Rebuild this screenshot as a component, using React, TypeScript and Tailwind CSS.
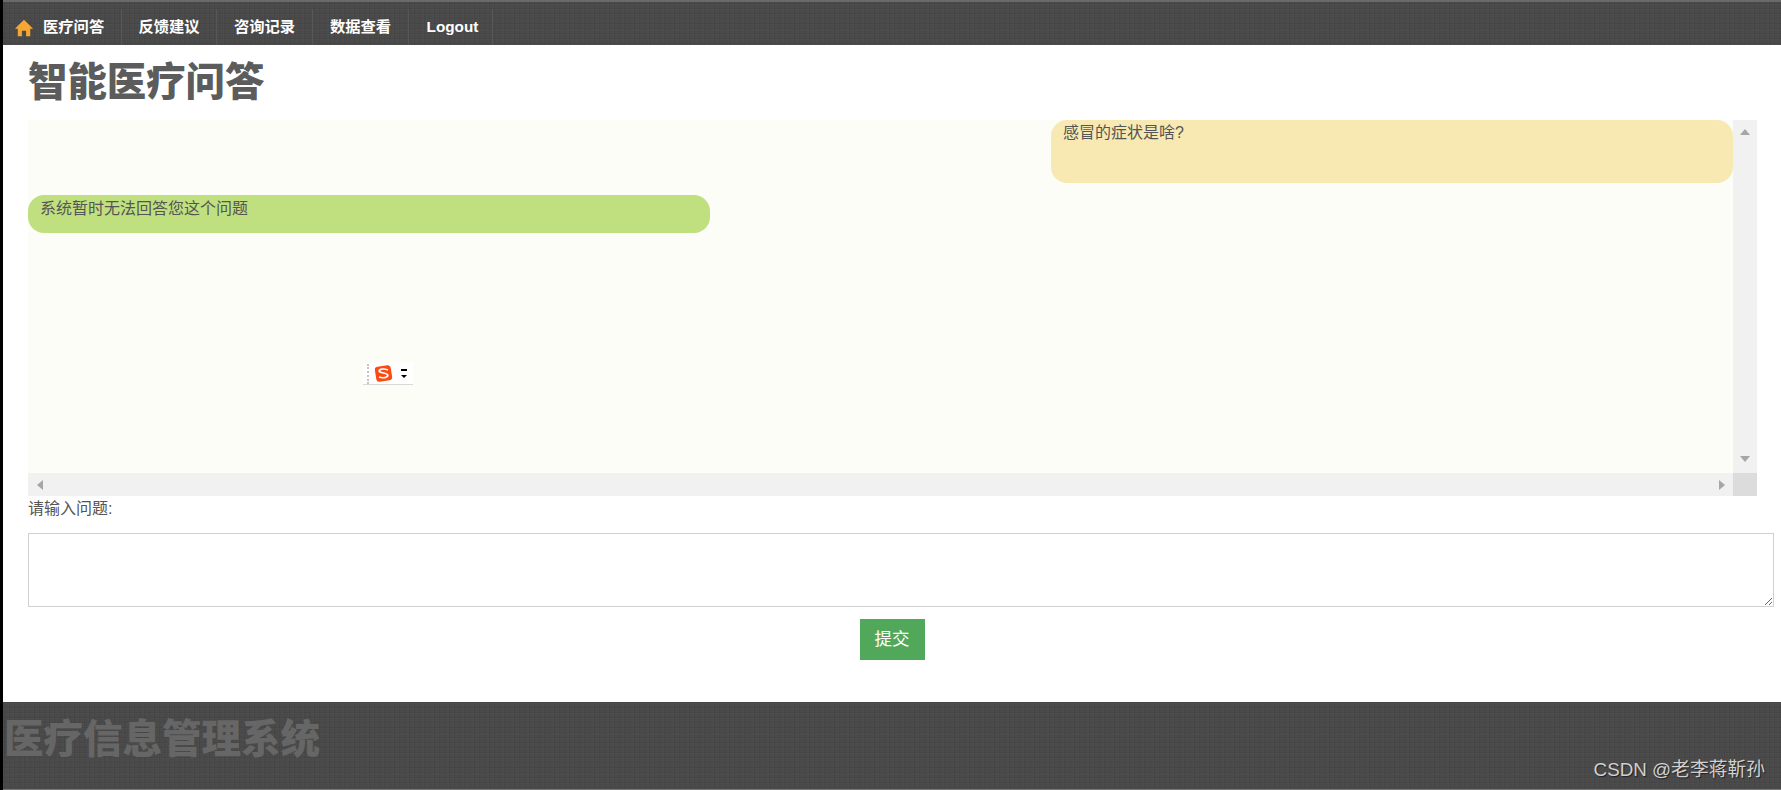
import React from 'react'

const weave =
  'bg-[#464646] bg-[image:repeating-linear-gradient(0deg,rgba(255,255,255,0.025)_0px,rgba(255,255,255,0.025)_1px,rgba(0,0,0,0.025)_1px,rgba(0,0,0,0.025)_2px,rgba(255,255,255,0.01)_2px,rgba(255,255,255,0.01)_5px),repeating-linear-gradient(90deg,rgba(255,255,255,0.025)_0px,rgba(255,255,255,0.025)_1px,rgba(0,0,0,0.025)_1px,rgba(0,0,0,0.025)_2px,rgba(255,255,255,0.01)_2px,rgba(255,255,255,0.01)_5px)]'

const font = 'font-["Liberation_Sans","Noto_Sans_CJK_SC",sans-serif]'

const navItems = [
  { label: '反馈建议', width: 'w-[95px]' },
  { label: '咨询记录', width: 'w-[96px]' },
  { label: '数据查看', width: 'w-[96px]' },
  { label: 'Logout', width: 'w-[84px]' },
]

const Triangle = ({ dir }: { dir: 'up' | 'down' | 'left' | 'right' }) => {
  const points = {
    up: '0,7 10,7 5,1',
    down: '0,1 10,1 5,7',
    left: '7,0 7,10 1,5',
    right: '1,0 1,10 7,5',
  }
  return (
    <svg width="10" height="10" viewBox="0 0 10 10" className="block">
      <polygon points={points[dir]} fill="#a6a6a6" />
    </svg>
  )
}

const NavBar = () => (
  <nav className={`${weave} flex h-[45px] shrink-0 border-t-2 border-[#6a6a6a] pt-[7px] text-[15.3px] font-bold text-white`}>
    <div className="flex w-[119px] items-center border-r border-[#565656] pl-[11px]">
      <svg width="20" height="20" viewBox="0 0 18 18" className="mt-[1px]">
        <path
          d="M9 1.5 L17.2 9.6 L14.6 9.6 L14.6 16.5 L10.9 16.5 L10.9 11.4 L7.1 11.4 L7.1 16.5 L3.4 16.5 L3.4 9.6 L0.8 9.6 Z"
          fill="#f6a634"
        />
      </svg>
      <span className="ml-[9px]">医疗问答</span>
    </div>
    {navItems.map((item) => (
      <div
        key={item.label}
        className={`flex ${item.width} items-center justify-center border-r border-[#565656] ${item.label === 'Logout' ? 'pl-[4px] font-semibold' : ''}`}
      >
        {item.label}
      </div>
    ))}
  </nav>
)

const ImeWidget = () => (
  <div className="absolute left-[335px] top-[243px] flex h-[22px] w-[50px] items-center border-b border-[#d8d8d8] bg-white">
    <div className="ml-[4px] h-[20px] border-l-2 border-dotted border-[#c4c4c4]" />
    <svg width="19" height="19" viewBox="0 0 19 19" className="ml-[5px]">
      <rect x="1.5" y="2" width="16" height="15" rx="3" fill="#fb4a12" transform="rotate(-9 9.5 9.5)" />
      <path
        d="M14 6 C10 4.4 5.2 4.8 5.2 7 C5.2 9.6 13.8 8.4 13.8 11.2 C13.8 13.8 8.6 14.4 5 13"
        fill="none"
        stroke="#ffffff"
        strokeWidth="1.7"
      />
    </svg>
    <div className="ml-[8px] flex flex-col items-center gap-[4px]">
      <div className="h-[2px] w-[6px] bg-black" />
      <div className="h-0 w-0 border-x-[3px] border-t-[3px] border-x-transparent border-t-black" />
    </div>
  </div>
)

const ChatBox = () => (
  <div className="relative mr-[17px] grid h-[376px] grid-cols-[1fr_24px] grid-rows-[1fr_23px]">
    <div className="flex flex-col bg-[#fdfdf8] text-[#555]">
      <div className="h-[63px] w-[682px] self-end rounded-[16px] bg-[#f8e9b2] pl-[12px] pt-[1px] leading-[24px]">
        感冒的症状是啥?
      </div>
      <div className="mt-[12px] h-[38px] w-[682px] rounded-[16px] bg-[#c0e080] pl-[12px] pt-[2px] leading-[24px]">
        系统暂时无法回答您这个问题
      </div>
    </div>
    <div className="flex flex-col items-center justify-between bg-[#f1f1f1] py-[8px]">
      <Triangle dir="up" />
      <Triangle dir="down" />
    </div>
    <div className="flex items-center justify-between bg-[#f1f1f1] pl-[8px] pr-[5px]">
      <Triangle dir="left" />
      <Triangle dir="right" />
    </div>
    <div className="bg-[#dcdcdc]" />
    <ImeWidget />
  </div>
)

export default function App() {
  return (
    <div className={`${font} flex h-[790px] w-full overflow-hidden bg-black text-[16px]`}>
      <div className="w-[3px] shrink-0" />
      <div className="relative flex min-w-0 flex-1 flex-col bg-white">
        <NavBar />
        <main className="flex flex-1 flex-col">
          <div className="pl-[25px] pr-[7px]">
            <h1 className="flex h-[75px] items-center text-[39.4px] font-black tracking-normal text-[#5c5c5c]">
              智能医疗问答
            </h1>
            <ChatBox />
            <label className="block h-[37px] pt-[1px] leading-[24px] text-[#555]">请输入问题:</label>
            <textarea className="block h-[74px] w-full border border-[#d0d0d0] bg-white outline-none" />
          </div>
          <div className="mt-[12px] flex justify-center">
            <button className="h-[41px] w-[65px] bg-[#52a85a] text-[17.5px] text-white">提交</button>
          </div>
        </main>
        <footer className={`${weave} h-[88px] shrink-0 border-b border-[#777] pl-[1px] pt-[15px] text-[39.5px] font-black leading-[44px] text-[#666]`}>
          医疗信息管理系统
        </footer>
        <div className="absolute bottom-[8px] right-[16px] text-[18.8px] leading-[24px] text-[#d0d0d0] [text-shadow:1px_1px_1px_#222]">
          CSDN @老李蒋靳孙
        </div>
      </div>
    </div>
  )
}
